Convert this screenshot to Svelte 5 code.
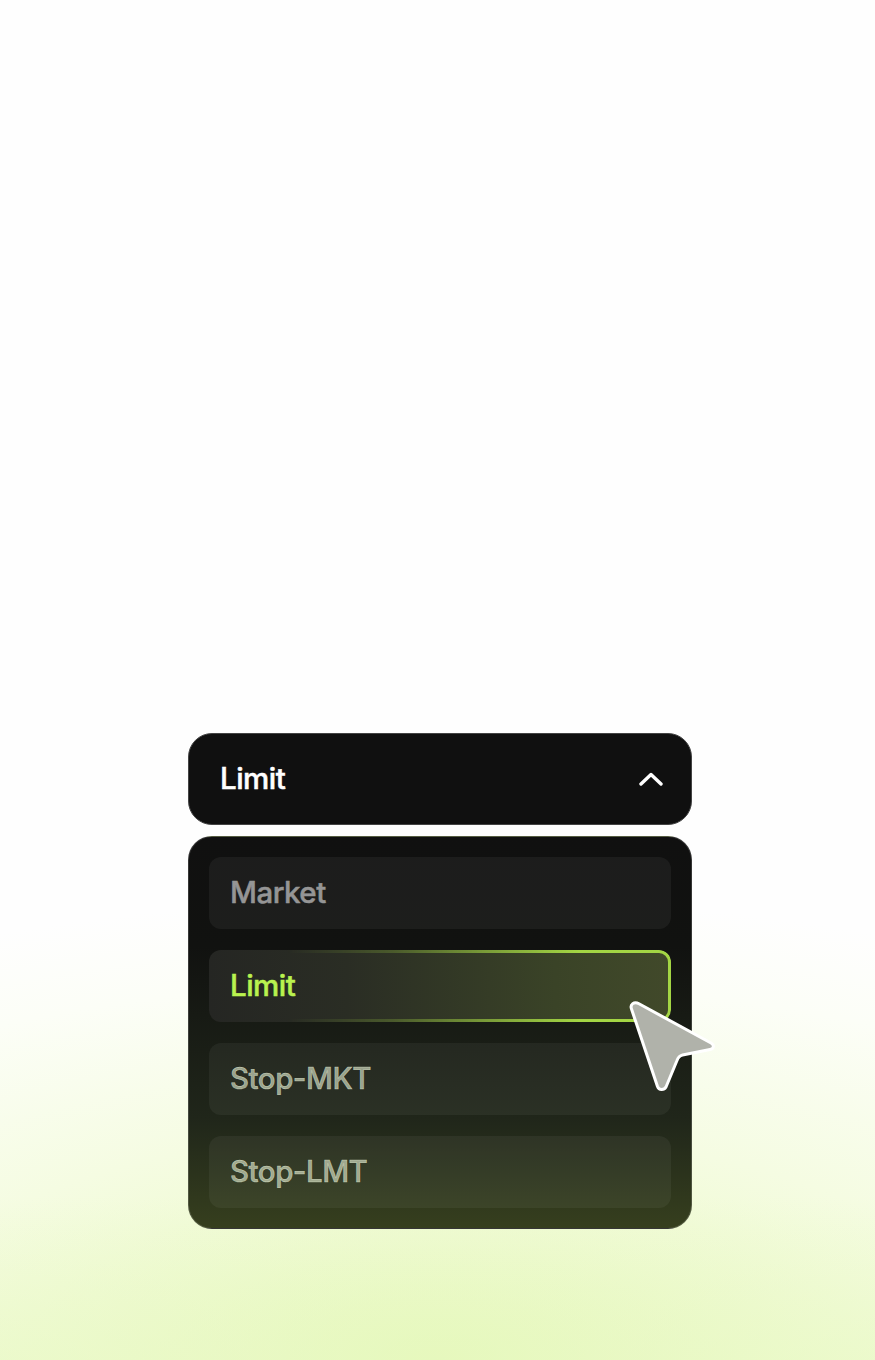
<script>
  const options = ["Market", "Limit", "Stop-MKT", "Stop-LMT"];
  let selected = "Limit";
</script>

<div class="page">
  <div class="dropdown">
    <div class="trigger">
      <span>{selected}</span>
      <svg class="chevron" width="24" height="14" viewBox="0 0 24 14" fill="none">
        <path d="M2 12 L12 2.5 L22 12" stroke="#fff" stroke-width="3.4" stroke-linecap="round" stroke-linejoin="round" />
      </svg>
    </div>

    <div class="panel">
      {#each options as opt}
        <div class="option" class:active={opt === selected}>{opt}</div>
      {/each}
    </div>

    <svg class="cursor" width="90" height="96" viewBox="0 0 90 96" fill="none">
      <path
        d="M3.500 9 L29.500 86.500 C31 90.500 36 90.500 38 87 L49 60.500 C50 57.500 51.500 55.800 54.500 55 L82 49.500 C86 48.700 86.500 45 83 43 L11 3.800 C6 1 1.800 4.500 3.500 9 Z"
        fill="#b0b2aa"
        stroke="#fff"
        stroke-width="3"
        stroke-linejoin="round"
      />
    </svg>
  </div>
</div>

<style>
  :global(body) {
    margin: 0;
  }

  .page {
    box-sizing: border-box;
    height: 1360px;
    padding-bottom: 131px;
    display: flex;
    flex-direction: column;
    justify-content: flex-end;
    align-items: center;
    font-family: Inter, "Liberation Sans", sans-serif;
    background:
      linear-gradient(180deg, rgba(255, 255, 255, 0) 88%, rgba(230, 248, 190, 0.5) 100%),
      radial-gradient(ellipse 130% 34% at 50% 100%, #e6f8bc 0%, #f5fce2 50%, #fcfef7 82%, #fefefe 100%);
  }

  .dropdown {
    position: relative;
    width: 504px;
    margin-left: 5px;
    display: flex;
    flex-direction: column;
    gap: 11px;
  }

  .trigger {
    box-sizing: border-box;
    height: 92px;
    padding: 0 28px 2px 31px;
    display: flex;
    align-items: center;
    justify-content: space-between;
    background: #101010;
    border: 1.5px solid #444;
    border-radius: 24px;
    color: #fff;
    font-size: 29.5px;
    font-weight: 500;
    letter-spacing: -0.5px;
    -webkit-text-stroke: 0.5px currentColor;
  }

  .chevron {
    margin-top: 2px;
  }

  .panel {
    box-sizing: border-box;
    height: 393px;
    padding: 20px;
    display: flex;
    flex-direction: column;
    gap: 21px;
    border: 1.5px solid rgba(255, 255, 255, 0.16);
    border-radius: 24px;
    background: linear-gradient(180deg, #101010 0%, #111210 28%, #20261a 72%, #363f1e 100%);
  }

  .option {
    box-sizing: border-box;
    height: 72px;
    padding: 0 0 2px 21px;
    display: flex;
    align-items: center;
    border-radius: 12px;
    background: rgba(255, 255, 255, 0.05);
    color: rgba(245, 255, 225, 0.58);
    font-size: 29.5px;
    font-weight: 500;
    letter-spacing: -0.5px;
    -webkit-text-stroke: 0.5px currentColor;
  }

  .option:first-child {
    color: #959595;
  }

  .option.active {
    position: relative;
    color: #b9f24f;
    background: linear-gradient(90deg, #252623 0%, #2a2d24 30%, #3a4327 75%, #41492a 100%);
  }

  .option.active::after {
    content: "";
    position: absolute;
    inset: 0;
    border: 3px solid #a3d544;
    border-radius: 12px;
    -webkit-mask: linear-gradient(90deg, transparent 17%, rgba(0, 0, 0, 0.25) 40%, #000 80%);
    mask: linear-gradient(90deg, transparent 17%, rgba(0, 0, 0, 0.25) 40%, #000 80%);
  }

  .cursor {
    position: absolute;
    left: 440px;
    top: 267px;
  }
</style>
